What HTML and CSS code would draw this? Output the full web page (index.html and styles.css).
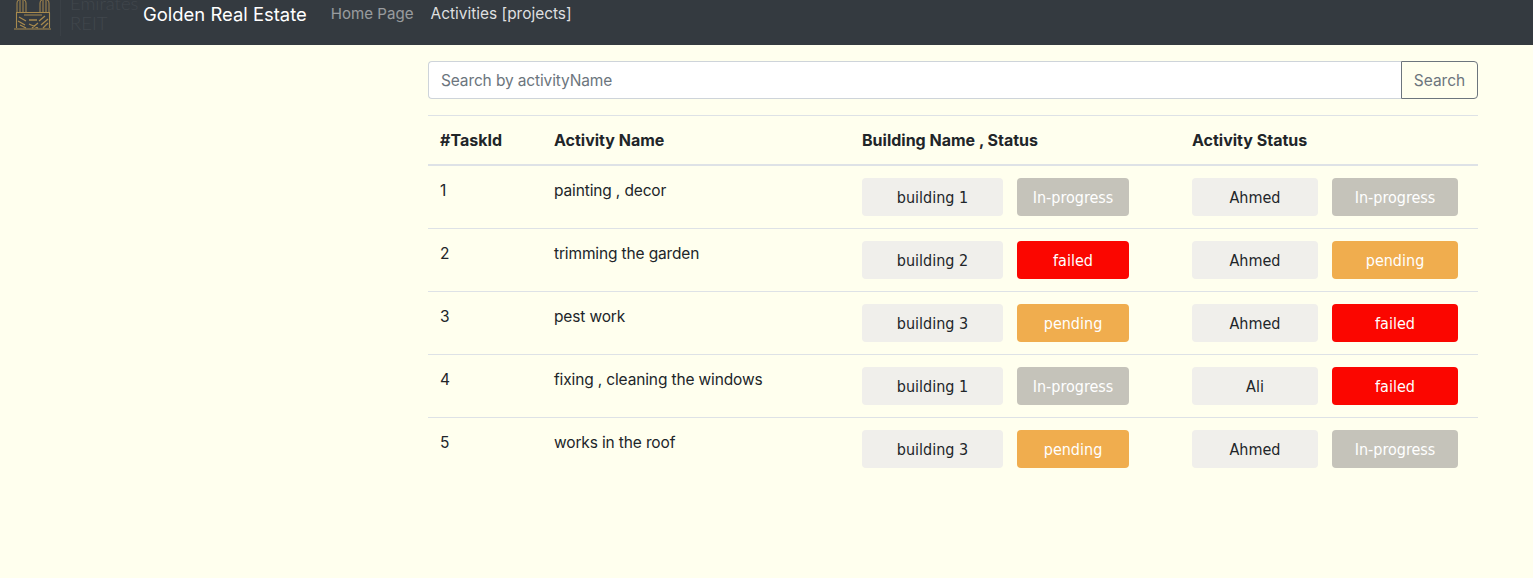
FILE: index.html
```html
<!DOCTYPE html>
<html lang="en">
<head>
    <meta charset="UTF-8">
    <meta name="viewport" content="width=device-width, initial-scale=1.0">
    <title>Golden Real Estate</title>
    <link rel="stylesheet" href="styles.css">
</head>
<body>
    <nav class="navbar">
        <a class="logo" href="#">
            <svg class="logo-mark" width="38" height="31" viewBox="0 0 38 31" fill="none" stroke="#a88a4e" stroke-width="1">
                <path d="M3 12V3Q3 0 5 0M6 12V0M9 12V0M12 12V3Q12 0 10 0"/>
                <path d="M26 12V3Q26 0 28 0M29 12V0M32 12V0M35 12V3Q35 0 33 0"/>
                <path d="M2 12.5H36M10 15H28" stroke-width="1.2"/>
                <path d="M2.5 13V28M35.5 13V28M0 29H37" stroke-width="1.1"/>
                <path d="M5 17L12 21M4 21L11 25M6 25L12 28M15 20L23 20M15 24L24 28M24 23L18 28M31 16L25 21M34 19L27 25M34 23L29 28" stroke-width="1.3"/>
            </svg>
            <span class="logo-rule"></span>
            <span class="logo-text">Emirates<br>REIT</span>
        </a>
        <a class="brand" href="#">Golden Real Estate</a>
        <a class="nav-link" href="#">Home Page</a>
        <a class="nav-link active" href="#">Activities [projects]</a>
    </nav>

    <main class="content">
        <form class="search">
            <input class="search-input" type="text" placeholder="Search by activityName">
            <button class="search-btn" type="button">Search</button>
        </form>

        <table class="tasks">
            <thead>
                <tr>
                    <th class="col-id">#TaskId</th>
                    <th class="col-name">Activity Name</th>
                    <th class="col-building">Building Name , Status</th>
                    <th>Activity Status</th>
                </tr>
            </thead>
            <tbody>
                <tr>
                    <td>1</td>
                    <td>painting , decor</td>
                    <td><div class="pair"><span class="tag tag-b">building 1</span><span class="tag tag-s progress">In-progress</span></div></td>
                    <td><div class="pair"><span class="tag tag-p">Ahmed</span><span class="tag tag-a progress">In-progress</span></div></td>
                </tr>
                <tr>
                    <td>2</td>
                    <td>trimming the garden</td>
                    <td><div class="pair"><span class="tag tag-b">building 2</span><span class="tag tag-s failed">failed</span></div></td>
                    <td><div class="pair"><span class="tag tag-p">Ahmed</span><span class="tag tag-a pending">pending</span></div></td>
                </tr>
                <tr>
                    <td>3</td>
                    <td>pest work</td>
                    <td><div class="pair"><span class="tag tag-b">building 3</span><span class="tag tag-s pending">pending</span></div></td>
                    <td><div class="pair"><span class="tag tag-p">Ahmed</span><span class="tag tag-a failed">failed</span></div></td>
                </tr>
                <tr>
                    <td>4</td>
                    <td>fixing , cleaning the windows</td>
                    <td><div class="pair"><span class="tag tag-b">building 1</span><span class="tag tag-s progress">In-progress</span></div></td>
                    <td><div class="pair"><span class="tag tag-p">Ali</span><span class="tag tag-a failed">failed</span></div></td>
                </tr>
                <tr>
                    <td>5</td>
                    <td>works in the roof</td>
                    <td><div class="pair"><span class="tag tag-b">building 3</span><span class="tag tag-s pending">pending</span></div></td>
                    <td><div class="pair"><span class="tag tag-p">Ahmed</span><span class="tag tag-a progress">In-progress</span></div></td>
                </tr>
            </tbody>
        </table>
    </main>
</body>
</html>
```

FILE: styles.css
```css
* {
    box-sizing: border-box;
}
html, body {
    height: 100%;
}
body {
    margin: 0;
    font-family: Inter, "Liberation Sans", sans-serif;
    font-size: 16px;
    line-height: 24px;
    color: #212529;
    background-color: #ffffee;
    overflow: hidden;
}
a {
    text-decoration: none;
}
.navbar {
    display: flex;
    align-items: flex-start;
    height: 45px;
    background-color: #343a40;
    overflow: hidden;
}
.logo {
    display: flex;
    flex: none;
    width: 143px;
    padding-left: 14px;
}
.logo-mark {
    flex: none;
}
.logo-rule {
    flex: none;
    width: 1px;
    height: 36px;
    margin-left: 8px;
    background-color: #3a4046;
}
.logo-text {
    margin: -7px 0 0 9px;
    font-family: Lato, sans-serif;
    font-size: 18.5px;
    font-weight: 300;
    line-height: 20px;
    color: #41474d;
}
.brand {
    margin: 2px 24px 0 0;
    font-size: 18.45px;
    line-height: 24px;
    color: #fff;
}
.nav-link {
    margin: 2px 17px 0 0;
    font-size: 15.1px;
    line-height: 24px;
    color: rgba(255, 255, 255, 0.5);
}
.nav-link.active {
    font-size: 15.45px;
    color: rgba(255, 255, 255, 0.85);
}
.content {
    padding: 16px 55px 0 428px;
}
.search {
    display: flex;
    height: 38px;
    margin-bottom: 16px;
}
.search-input {
    flex: 1;
    min-width: 0;
    padding: 7px 12px 5px;
    font: inherit;
    font-size: 15.5px;
    letter-spacing: -0.13px;
    color: #495057;
    background: #fff;
    border: 1px solid #ced4da;
    border-right: 0;
    border-radius: 4px 0 0 4px;
}
.search-input::placeholder {
    color: #6c757d;
    opacity: 1;
}
.search-btn {
    width: 77px;
    padding: 2px 0 0;
    font: inherit;
    font-size: 15.5px;
    color: #6c757d;
    background: transparent;
    border: 1px solid #6c757d;
    border-radius: 0 4px 4px 0;
}
.tasks {
    width: 100%;
    table-layout: fixed;
    border-collapse: collapse;
}
.tasks th {
    padding: 12px;
    font-weight: 700;
    text-align: left;
    vertical-align: bottom;
    border-top: 1px solid #dee2e6;
    border-bottom: 2px solid #dee2e6;
}
.tasks td {
    height: 63px;
    padding: 12px;
    font-size: 15.5px;
    line-height: 26px;
    letter-spacing: -0.14px;
    vertical-align: top;
    border-top: 1px solid #dee2e6;
}
.tasks tbody tr:first-child td {
    border-top: 0;
}
.tasks tbody tr:last-child td {
    height: 62px;
}
.col-id {
    width: 114px;
}
.col-name {
    width: 308px;
}
.col-building {
    width: 330px;
}
.pair {
    display: flex;
    gap: 14px;
}
.tag {
    flex: none;
    height: 38px;
    font-family: "DejaVu Sans", "Noto Sans", sans-serif;
    font-stretch: condensed;
    font-size: 16px;
    letter-spacing: 0;
    line-height: 40px;
    text-align: center;
    border-radius: 4px;
}
.tag-b {
    width: 141px;
    background-color: #f0efeb;
}
.tag-s {
    width: 112px;
}
.tag-p {
    width: 126px;
    background-color: #f0efeb;
}
.tag-a {
    width: 126px;
}
.progress {
    color: #fff;
    background-color: #c5c3ba;
}
.failed {
    color: #fff;
    background-color: #fb0600;
}
.pending {
    color: #fff;
    background-color: #f0ad4e;
}
```
